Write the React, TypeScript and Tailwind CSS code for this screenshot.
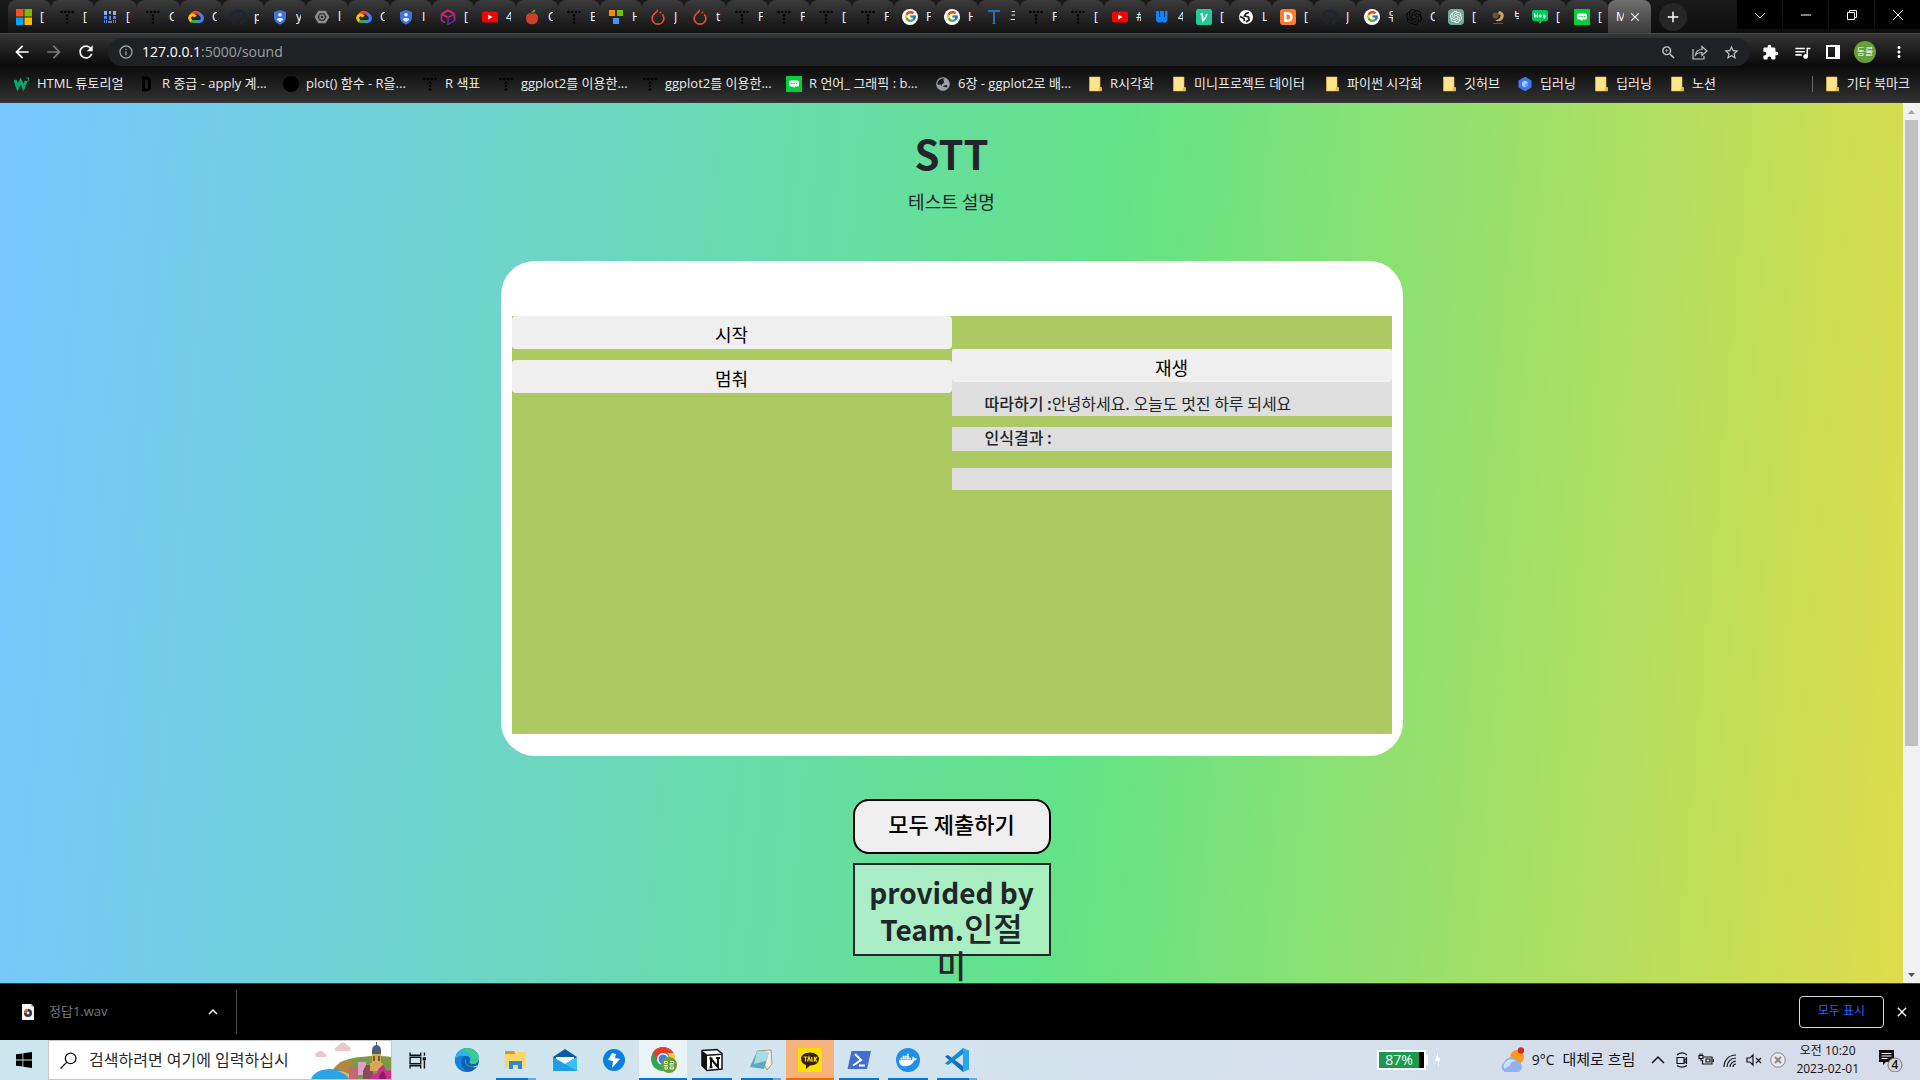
import type { ReactNode } from "react";
import {
  MdArrowBack,
  MdArrowForward,
  MdRefresh,
  MdInfoOutline,
  MdZoomIn,
  MdStarBorder,
  MdExtension,
  MdQueueMusic,
  MdMoreVert,
  MdClose,
  MdAdd,
  MdExpandLess,
} from "react-icons/md";
import { SiPytorch, SiOpenai, SiGithub } from "react-icons/si";
import { FaDocker, FaGlobeAsia } from "react-icons/fa";
import { FcGoogle } from "react-icons/fc";

/* ---------- Favicons ---------- */

function Svg({ children, size = 16 }: { children: ReactNode; size?: number }) {
  return (
    <svg viewBox="0 0 16 16" width={size} height={size} className="shrink-0" aria-hidden="true">
      {children}
    </svg>
  );
}

const favicons: Record<string, ReactNode> = {
  microsoft: (
    <Svg>
      <path fill="#f25022" d="M0 0h7.5v7.5H0z" />
      <path fill="#7fba00" d="M8.5 0H16v7.5H8.5z" />
      <path fill="#00a4ef" d="M0 8.5h7.5V16H0z" />
      <path fill="#ffb900" d="M8.5 8.5H16V16H8.5z" />
    </Svg>
  ),
  dots: (
    <Svg>
      <g fill="#000">
        <circle cx="2.500" cy="3" r="1.300" />
        <circle cx="6.200" cy="3" r="1.300" />
        <circle cx="9.900" cy="3" r="1.300" />
        <circle cx="13.500" cy="3" r="1.300" />
        <circle cx="8" cy="6.500" r="1.300" />
        <circle cx="8" cy="10" r="1.300" />
        <circle cx="8" cy="13.500" r="1.300" />
      </g>
    </Svg>
  ),
  bars: (
    <Svg>
      <path fill="#8ab0f5" d="M2 2h3v4H2zM7 2h2v3H7zM11 2h3v4h-3z" />
      <path fill="#5180e0" d="M2 7h3v3H2zM7 7h2v4H7zM11 7h3v3h-3zM2 11h1v3H2zM4 11h1v3H4zM6 12h4v2H6zM11 11h1v3h-1zM13 11h1v3h-1z" />
    </Svg>
  ),
  cloud: (
    <Svg>
      <g fill="none" strokeWidth="3">
        <path stroke="#ea4335" d="M3.6 6C4.8 2.6 9.500 2.200 11.500 5" />
        <path stroke="#4285f4" d="M11 4.800c2.500 1.400 3.800 2.800 3.300 5.200-.5 2-2 2.600-3.300 2.600H8" />
        <path stroke="#34a853" d="M9 12.600H5c-.8 0-1.600-.3-2.200-.8" />
        <path stroke="#fbbc04" d="M3.400 12.200C.6 10 1.400 6.700 4 6c1.500-.3 3 .6 3.500 1.700" />
      </g>
    </Svg>
  ),
  github: <SiGithub size={16} color="#1f262d" />,
  shield: (
    <Svg>
      <path fill="#3f74dc" d="M8 1l6 2v5c0 4-3 6.500-6 7.500C5 14.500 2 12 2 8V3z" />
      <circle cx="8" cy="5.800" r="1.800" fill="#e8f0fe" />
      <path fill="#e8f0fe" d="M4.600 10.500c1-2 5.800-2 6.800 0L8 13z" />
    </Svg>
  ),
  hexnut: (
    <Svg>
      <path fill="none" stroke="#8c8c8c" strokeWidth="2.500" d="M5 3h6l3 5-3 5H5L2 8z" />
      <circle cx="8" cy="8" r="2" fill="none" stroke="#8c8c8c" strokeWidth="1.500" />
    </Svg>
  ),
  cube: (
    <Svg>
      <g fill="none" strokeWidth="1.800">
        <path stroke="#e5256d" d="M1.500 5L8 1.200 14.500 5M1.500 5L8 8.500" />
        <path stroke="#a02a86" d="M1.500 4.500v7L5 13.500M8 8.500L14.500 5v7" />
        <path stroke="#5b2a8c" d="M8 8v7.500l6.500-4" />
      </g>
    </Svg>
  ),
  youtube: (
    <Svg>
      <rect y="2.500" width="16" height="11" rx="2.500" fill="#f00" />
      <path fill="#fff" d="M6.200 5.500v5L10.500 8z" />
    </Svg>
  ),
  apple: (
    <Svg>
      <path fill="#d03f2b" d="M8 5c3-2 6 0 6 4s-3 7-6 6c-3 1-6-2-6-6s3-6 6-4z" />
      <path fill="none" stroke="#7a4a21" d="M8 5l-.5-3" />
      <path fill="#5fa83a" d="M8 3.500C8.500 1 10.500.5 11.500 1c-.5 2-2 3-3.500 2.500z" />
    </Svg>
  ),
  squares: (
    <Svg>
      <path fill="#f80" d="M1 1h6v6H1z" />
      <path fill="#6fc400" d="M9 1h6v6H9z" />
      <path fill="#3f97f2" d="M5 9h6v6H5z" />
    </Svg>
  ),
  pytorch: <SiPytorch size={16} color="#ee4c2c" />,
  google: (
    <span className="grid size-4 place-items-center rounded-full bg-white">
      <FcGoogle size={13} />
    </span>
  ),
  tblue: (
    <Svg>
      <path fill="#2673b8" d="M2 1h12v2H9v11l1 1H6l1-1V3H2z" />
    </Svg>
  ),
  wblue: (
    <Svg>
      <path fill="#0a84ff" d="M2 2h3v6h1V2h4v6h1V2h2.500v9l-1.500 2.500h-3L8 12.500l-1 1H3.500L2 11z" />
    </Svg>
  ),
  velog: (
    <Svg>
      <rect width="16" height="16" rx="2" fill="#20c997" />
      <path fill="none" stroke="#fff" strokeWidth="1.800" d="M4.500 5.500l1.500-.5 1 6.500c2.500-2.500 4-4 3.500-6.500" />
    </Svg>
  ),
  globe: (
    <Svg>
      <circle cx="8" cy="8" r="7" fill="#fff" />
      <path fill="none" stroke="#202124" strokeWidth="1.800" d="M11 3.500L8 4.500 6.500 7l4 1 .5 3-3 2M2 7.500l4 2 .5 2.500" />
    </Svg>
  ),
  graydoc: <FaGlobeAsia size={14} color="#9aa0a6" />,
  dorange: (
    <Svg>
      <rect width="16" height="16" rx="3" fill="#ff7a29" />
      <path fill="none" stroke="#fff" strokeWidth="2.500" d="M5.200 4.200h2.500c5 0 5 7.600 0 7.600H5.200z" />
    </Svg>
  ),
  openai: <SiOpenai size={16} color="#050505" />,
  chatgpt: (
    <span className="grid size-4 place-items-center rounded-sm bg-[#74aa9c]">
      <SiOpenai size={12} color="#fff" />
    </span>
  ),
  bird: (
    <Svg>
      <path fill="#caa26a" d="M9 2c4 0 6 4 4 7.500S7 13 5 11c3 0 6-2 5.500-5L8 5z" />
      <circle cx="5.500" cy="6.500" r="3" fill="#6d5436" />
      <path stroke="#6d5436" d="M3 14.500h10" />
    </Svg>
  ),
  blog: (
    <Svg>
      <path fill="#03c75a" d="M2 1h12a2 2 0 012 2v7a2 2 0 01-2 2h-4l-2 3-2-3H2a2 2 0 01-2-2V3a2 2 0 012-2z" />
      <path fill="none" stroke="#fff" d="M2.500 4v4h1.500V6H2.500M5.500 4v4.500M7.500 6h1.500v2H7.500zM11.500 6h1.500v3h-1.500M11.500 6v2h1.500" />
    </Svg>
  ),
  naver: (
    <Svg>
      <path fill="#03cf3c" d="M0 0h16v16H0z" />
      <path fill="#fff" d="M4.500 4.500h7a1.500 1.500 0 011.500 1.500v3a1.500 1.500 0 01-1.500 1.500H9L8 12l-1-1.500H4.500A1.500 1.500 0 013 9V6a1.500 1.500 0 011.500-1.500z" />
      <path stroke="#03cf3c" d="M5 7.500h1.500M7.500 7.500H9M10 7.500h1.200" />
    </Svg>
  ),
  w3: (
    <Svg>
      <path fill="none" stroke="#04aa6d" strokeWidth="3" d="M1 4l2.500 7.500L6.500 5l3 6.500L12 5" />
      <path fill="none" stroke="#04aa6d" d="M12.500 2H15l-1 1.500c2 0 1 2.500-1 1.800" />
    </Svg>
  ),
  dblack: (
    <Svg>
      <path fill="none" stroke="#000" strokeWidth="3" d="M4.500 2v12h3c2 0 3-1 3-3V5c0-2-1-3-3-3z" />
    </Svg>
  ),
  blackdot: (
    <Svg>
      <circle cx="8" cy="8" r="8" fill="#000" />
    </Svg>
  ),
  folder: (
    <Svg>
      <path fill="#ffe48c" stroke="#e8c04c" strokeWidth=".6" d="M2.500 1H13v10.500h1.500V15h-12z" />
      <path fill="#e8bd3f" d="M12 11.500h2.500V15h-3z" />
    </Svg>
  ),
  hexblue: (
    <Svg>
      <path fill="#3b78f0" d="M8 .8l6.500 3.600v7.200L8 15.200l-6.500-3.600V4.400z" />
      <path fill="#a9c6ff" d="M8 4.500l3 1.700v3.500L8 11.500 5 9.700V6.200z" />
      <path fill="#6c9bf7" d="M8 8l3-1.800v3.500L8 11.500z" />
    </Svg>
  ),
};

/* ---------- Browser data ---------- */

const tabs: [string, string][] = [
  ["microsoft", "["], ["dots", "["], ["bars", "["], ["dots", "C"], ["cloud", "C"], ["github", "p"],
  ["shield", "y"], ["hexnut", "l"], ["cloud", "C"], ["shield", "I"], ["cube", "["], ["youtube", "4"],
  ["apple", "C"], ["dots", "E"], ["squares", "H"], ["pytorch", "J"], ["pytorch", "t"], ["dots", "F"],
  ["dots", "F"], ["dots", "["], ["dots", "F"], ["google", "F"], ["google", "H"], ["tblue", "크"],
  ["dots", "F"], ["dots", "["], ["youtube", "#"], ["wblue", "4"], ["velog", "["], ["globe", "L"],
  ["dorange", "["], ["github", "J"], ["google", "위"], ["openai", "C"], ["chatgpt", "["], ["bird", "빅"],
  ["blog", "["], ["naver", "["],
];

const bookmarks: [string, string, string][] = [
  ["w3", "HTML 튜토리얼", "w-[125px]"],
  ["dblack", "R 중급 - apply 계...", "w-[144px]"],
  ["blackdot", "plot() 함수 - R을...", "w-[139px]"],
  ["dots", "R 색표", "w-[76px]"],
  ["dots", "ggplot2를 이용한...", "w-[144px]"],
  ["dots", "ggplot2를 이용한...", "w-[144px]"],
  ["naver", "R 언어_ 그래픽 : b...", "w-[149px]"],
  ["graydoc", "6장 - ggplot2로 배...", "w-[152px]"],
  ["folder", "R시각화", "w-[84px]"],
  ["folder", "미니프로젝트 데이터", "w-[153px]"],
  ["folder", "파이썬 시각화", "w-[117px]"],
  ["folder", "깃허브", "w-[76px]"],
  ["hexblue", "딥러닝", "w-[76px]"],
  ["folder", "딥러닝", "w-[76px]"],
  ["folder", "노션", "w-[60px]"],
];

/* ---------- Browser chrome ---------- */

function TabStrip() {
  return (
    <div className="flex h-[33px] shrink-0 items-stretch bg-linear-to-b from-[#1a1a1a] to-[#0e0e0e] pl-2">
      {tabs.map(([icon, title], i) => (
        <button
          key={i}
          className={
            (i < 4 ? "w-[43px]" : "w-[42px]") +
            " flex shrink-0 items-center gap-2 rounded-t-lg bg-linear-to-b from-[#3c3c3c] to-[#121212] pl-2 text-left"
          }
        >
          <span className="flex w-4 justify-center">{favicons[icon]}</span>
          <span className="w-[5px] shrink-0 overflow-hidden whitespace-nowrap text-xs text-white">{title}</span>
          <span className="mb-1.5 ml-auto h-5 w-px shrink-0 self-end bg-[#5a5a5a]" />
        </button>
      ))}
      <div className="flex w-[43px] shrink-0 items-center gap-1 rounded-t-lg bg-linear-to-b from-[#707070] to-[#3a3a3a] pl-2 text-white">
        <span className="w-2 overflow-hidden text-xs">M</span>
        <button aria-label="탭 닫기">
          <MdClose size={14} />
        </button>
      </div>
      <button aria-label="새 탭" className="ml-2 mt-[3px] grid size-7 place-items-center rounded-full bg-[#262626] text-white">
        <MdAdd size={18} />
      </button>
      <div className="ml-auto flex h-[29px] gap-px text-white">
        {["M3 6l5 5 5-5", "M3 8h10", "M3.500 5.500h7v7h-7zM5.500 5.500v-2h7v7h-2", "M3 3l10 10M13 3L3 13"].map((d, i) => (
          <button key={i} aria-label={["탭 검색", "최소화", "이전 크기로", "닫기"][i]} className="grid w-[45px] place-items-center bg-black">
            <svg viewBox="0 0 16 16" width="16" height="16" fill="none" stroke="currentColor">
              <path d={d} />
            </svg>
          </button>
        ))}
      </div>
    </div>
  );
}

function Toolbar() {
  return (
    <div className="flex h-[33px] shrink-0 items-end border-t border-[#484848] bg-linear-to-b from-[#363636] to-[#0a0a0a] pl-3 text-white">
      <div className="flex h-7 items-center gap-3 pr-3">
        <button aria-label="뒤로"><MdArrowBack size={20} /></button>
        <button aria-label="앞으로" className="text-[#7a7a7a]"><MdArrowForward size={20} /></button>
        <button aria-label="새로고침"><MdRefresh size={20} /></button>
      </div>
      <div className="flex h-7 grow items-center rounded-full bg-[#202124] pl-2.5 pr-2.5 text-[#9aa0a6]">
        <MdInfoOutline size={16} />
        <label className="relative ml-2 flex grow items-center">
          <span aria-hidden="true" className="text-sm leading-5 whitespace-nowrap">
            <span className="text-white">127.0.0.1</span>:5000/sound
          </span>
          <input aria-label="주소" className="absolute inset-0 bg-transparent outline-none" />
        </label>
        <div className="flex items-center gap-[15px] text-[#c4c7c9]">
          <button aria-label="확대/축소"><MdZoomIn size={17} /></button>
          <button aria-label="공유">
            <svg viewBox="0 0 16 16" width="16" height="16" fill="none" stroke="currentColor" strokeWidth="1.200">
              <path d="M1 5v10h11v-3M3.500 11c.5-4 3-5.500 6.500-5.500V2.500l5 4.500-5 4.500V8.500c-3 0-5 .5-6.500 2.500z" />
            </svg>
          </button>
          <button aria-label="북마크에 추가"><MdStarBorder size={17} /></button>
        </div>
      </div>
      <div className="flex h-7 items-center gap-3.5 pl-3 pr-3">
        <button aria-label="확장 프로그램"><MdExtension size={17} /></button>
        <button aria-label="미디어 제어"><MdQueueMusic size={19} /></button>
        <button aria-label="사이드 패널">
          <svg viewBox="0 0 14 14" width="14" height="14">
            <path fill="#fff" fillRule="evenodd" d="M0 0h14v14H0zM2 2v10h7V2z" />
          </svg>
        </button>
        <button className="grid size-[22px] place-items-center rounded-full bg-[#689f38] text-[9px]">동률</button>
        <button aria-label="메뉴"><MdMoreVert size={18} /></button>
      </div>
    </div>
  );
}

function BookmarkBar() {
  return (
    <nav className="flex h-[37px] shrink-0 items-center border-b border-[#3a3a3a] bg-linear-to-b from-[#0c0c0c] to-[#323232] pl-3.5 pr-2.5 text-[13px] text-[#e8eaed]">
      {bookmarks.map(([icon, title, width], i) => (
        <a key={i} href="#" className={width + " flex shrink-0 items-center gap-[7px] whitespace-nowrap"}>
          <span className="flex w-4 justify-center">{favicons[icon]}</span>
          {title}
        </a>
      ))}
      <a href="#" className="ml-auto flex items-center gap-[7px] whitespace-nowrap">
        <span className="mr-1 h-4 w-px bg-[#6a6a6a]" />
        {favicons.folder}
        기타 북마크
      </a>
    </nav>
  );
}

/* ---------- Page ---------- */

function Page() {
  return (
    <div className="flex min-h-0 grow">
      <main className="flex min-w-0 grow flex-col items-center overflow-hidden bg-[linear-gradient(95deg,#78c8ff_1%,#62e387_56%,#e4dc48_100%)] bg-[length:100%_1197px] pt-[26px] font-['Noto_Sans_CJK_KR',sans-serif] text-[#212529]">
        <h1 className="text-[40px] leading-[48px] font-bold">STT</h1>
        <p className="mt-2.5 text-lg leading-7">테스트 설명</p>
        <section className="mt-[46px] w-[902px] shrink-0 rounded-[34px] bg-white px-[11px] pt-[55px] pb-[22px]">
          <div className="grid min-h-[418px] grid-cols-2 content-start bg-[#adca62]">
            <div className="flex flex-col gap-[11px]">
              <button className="h-[33px] rounded bg-[#efefef] pt-0.5 text-lg leading-7 text-black">시작</button>
              <button className="h-[33px] rounded bg-[#efefef] pt-0.5 text-lg leading-7 text-black">멈춰</button>
            </div>
            <div className="pt-[33px] leading-6">
              <div className="bg-[#dedede]">
                <button className="block h-[33px] w-full rounded bg-[#efefef] pt-0.5 text-lg leading-7 text-black">재생</button>
                <p className="h-[34px] px-[33px] pt-[9px]">
                  <b className="font-medium">따라하기 :</b>안녕하세요. 오늘도 멋진 하루 되세요
                </p>
              </div>
              <p className="mt-[11px] h-6 bg-[#dedede] px-[33px] leading-5 font-medium">인식결과 :</p>
              <p className="mt-[17px] h-[22px] bg-[#dedede]" />
            </div>
          </div>
        </section>
        <button className="mt-[43px] h-[55px] w-[198px] shrink-0 rounded-2xl border-2 border-black bg-[#efefef] pb-2 text-[22px] leading-8 font-medium text-black">
          모두 제출하기
        </button>
        <div className="mt-[9px] h-[93px] w-[198px] shrink-0 border-2 border-[#212529] bg-white/45 pt-2.5 text-center text-[28px] leading-[35px] font-bold whitespace-nowrap">
          provided by
          <br />
          Team.<span className="text-[32px] font-medium">인절<br />미</span>
        </div>
      </main>
      <div className="flex w-[17px] shrink-0 flex-col items-center justify-between bg-[#f1f1f1]">
        <svg viewBox="0 0 17 17" width="17" height="17"><path fill="#a3a3a3" d="M5 11l3.500-4 3.500 4z" /></svg>
        <div className="flex w-[13px] grow flex-col"><div className="h-[74%] bg-[#c1c1c1]" /></div>
        <svg viewBox="0 0 17 17" width="17" height="17"><path fill="#505050" d="M5 7l3.500 4L12 7z" /></svg>
      </div>
    </div>
  );
}

function DownloadBar() {
  return (
    <div className="flex h-[57px] shrink-0 items-center border-t border-[#3c4043] bg-black pl-5 pr-2.5">
      <svg viewBox="0 0 16 16" width="16" height="16">
        <path fill="#f4f4f4" d="M2 0h9l3 3v13H2z" />
        <path fill="#bbb" d="M11 0l3 3h-3z" />
        <circle cx="8" cy="9" r="4" fill="#3a3350" />
        <path fill="#e0703a" d="M4 9a4 4 0 014-4v2a2 2 0 00-2 2z" />
        <circle cx="8" cy="9" r="1.400" fill="#fff" />
      </svg>
      <span className="ml-[13px] text-[13px] text-[#75787b]">정답1.wav</span>
      <div className="flex grow items-center">
        <button aria-label="옵션 더보기" className="ml-24 text-white"><MdExpandLess size={18} /></button>
        <span className="ml-[14px] h-11 w-px bg-[#4a4a4a]" />
      </div>
      <button className="h-8 w-[85px] rounded border border-[#dadce0] pb-0.5 text-xs text-[#1967ff]">모두 표시</button>
      <button aria-label="닫기" className="ml-2.5 text-white"><MdClose size={16} /></button>
    </div>
  );
}

/* ---------- Taskbar ---------- */

function App24({ children }: { children: ReactNode }) {
  return (
    <svg viewBox="0 0 24 24" width="24" height="24" aria-hidden="true">
      {children}
    </svg>
  );
}

const apps: { name: string; cell: string; line: string; icon: ReactNode }[] = [
  {
    name: "Edge", cell: "", line: "",
    icon: (
      <App24>
        <circle cx="12" cy="12" r="12" fill="#0c63b8" />
        <path fill="#2cb5e8" d="M0 12C1 4 6 0 12 0c7 0 12 5 12 10 0 4-3 6-6 6-3 0-4-1-3-3 1-3-1-5-4-5C6 8 1 10 0 12z" />
        <path fill="#43cf7a" d="M12 0c7 0 12 5 12 10 0 4-3 6-6 6-3 0-4-1-3-3C18 9 14 3 6 2c2-1 4-2 6-2z" opacity=".75" />
        <path fill="#1583d8" d="M0 12c1-3 5-5 9-4-4 3-4 12 4 16C6 24 0 19 0 12z" />
        <path fill="#d2e7ef" d="M10.500 11c-1 3 1 6.500 5 7.500 3 .5 5.500 0 7-1.500l-.5 1.500c-1.500 1-8 1.500-11-2.500-1.300-2-1.500-4-.5-5z" />
      </App24>
    ),
  },
  {
    name: "파일 탐색기", cell: "", line: "w-10 bg-linear-to-r from-[#0078d7] from-80% to-[#66aae4] to-80%",
    icon: (
      <App24>
        <path fill="#d99a10" d="M1 3h9l2 3H1z" />
        <path fill="#ffd767" d="M1 6h10l2-2h9v16H1z" />
        <path fill="#2f87d8" d="M5 21v-8h13v8h-4v-4h-5v4z" />
      </App24>
    ),
  },
  {
    name: "메일", cell: "", line: "",
    icon: (
      <App24>
        <path fill="#0a5aa8" d="M0 9l12-8 12 8v4H0z" />
        <path fill="#f5fafd" d="M3 9h18v6l-9 4-9-4z" />
        <path fill="#1e9fe8" d="M0 9l12 7L24 9v14H0z" />
        <path fill="#35c3f5" d="M12 16L24 9v14z" />
      </App24>
    ),
  },
  {
    name: "반디집", cell: "", line: "",
    icon: (
      <App24>
        <circle cx="12" cy="12" r="11" fill="#0b7fe0" />
        <path fill="#fff" d="M10 5L6 12l5 1-1 7 8-9-5-1 1-4z" />
      </App24>
    ),
  },
  {
    name: "Chrome", cell: "bg-[#eaf4f8]", line: "w-12 bg-[#0078d7]",
    icon: (
      <svg viewBox="0 0 28 28" width="28" height="28" aria-hidden="true">
        <circle cx="14" cy="13" r="12" fill="#34a353" />
        <path fill="#e23d30" d="M3.600 7a12 12 0 0120.800 0H14l-5 9z" />
        <path fill="#fcc934" d="M24.400 7A12 12 0 0114 25l5-9a6 6 0 00-1-9z" />
        <circle cx="14" cy="13" r="6" fill="#fff" />
        <circle cx="14" cy="13" r="4.500" fill="#3b7de8" />
        <circle cx="20" cy="19" r="8" fill="#689f38" />
        <path fill="none" stroke="#e4efd9" d="M15.500 15.500h3v2h-3zM15 19.500h4M16 21h2.500v2H16zM21 15.500h3.500v2H21v1.500h3.500M21 21h3.500v2H21z" />
      </svg>
    ),
  },
  {
    name: "Notion", cell: "", line: "w-10 bg-[#0078d7]",
    icon: (
      <App24>
        <path fill="#fff" stroke="#111" strokeWidth="1.500" d="M2 2.500L17 1.500l5 4V21l-15 1.500-5-5z" />
        <path fill="#111" d="M2 2.500l5 4.500v15.500l-5-5zM2 2.500l5 4 15-1v1.500L7 8z" />
        <path fill="none" stroke="#111" strokeWidth="2" d="M11 19v-8l7 8v-8.500M9.500 10.500h3M16 10h4M9.500 19.300h3" />
      </App24>
    ),
  },
  {
    name: "메모장", cell: "", line: "w-10 bg-linear-to-r from-[#0078d7] from-80% to-[#66aae4] to-80%",
    icon: (
      <App24>
        <path fill="#f1efe6" stroke="#8a7a5a" strokeWidth=".7" d="M8 3l14-1 1 14-5 6z" />
        <path fill="#5fa9bd" d="M8 3l12 1-5 17-14-2z" />
        <path fill="#a9dbe5" d="M8 3l12 1-3 9-12 3z" />
      </App24>
    ),
  },
  {
    name: "카카오톡", cell: "bg-[#f7b27c]", line: "w-12 bg-[#f76b00]",
    icon: (
      <App24>
        <path fill="#fae100" d="M0 0h24v24H0z" />
        <path fill="#391b1b" d="M12 4.500c5 0 9 2.800 9 6.500s-4 6.500-9 6.500L8 21v-4c-3-1-5-3.200-5-6 0-3.700 4-6.500 9-6.500z" />
        <path fill="none" stroke="#fae100" strokeWidth="1.200" d="M5.500 9h4M7.500 9v4.500M9.500 13.500L11 9l1.500 4.500M13.800 9v4h1.500M16.500 8.800v4.700M19 9l-2.200 2.200L19 13.500" />
      </App24>
    ),
  },
  {
    name: "PowerShell", cell: "", line: "w-10 bg-[#0078d7]",
    icon: (
      <App24>
        <path fill="#3f6fd0" d="M4.500 3H24l-4 18H.5z" />
        <path fill="none" stroke="#fff" strokeWidth="2" d="M8 6l6 6-8 5.500M12 17.500h6" />
      </App24>
    ),
  },
  {
    name: "Docker", cell: "", line: "w-10 bg-[#0078d7]",
    icon: (
      <span className="grid size-6 place-items-center rounded-full bg-[#1d8ff0]">
        <FaDocker size={18} color="#fff" />
      </span>
    ),
  },
  {
    name: "VS Code", cell: "", line: "w-10 bg-linear-to-r from-[#0078d7] from-80% to-[#66aae4] to-80%",
    icon: (
      <App24>
        <path fill="#0f6fb8" d="M0 8.500L3 7l15 11v6L0 8.500z" />
        <path fill="#1488d8" d="M0 15.500L3 17l15-11V0L0 15.500z" />
        <path fill="#2aa5f0" d="M18 0l6 2.500v19L18 24z" />
      </App24>
    ),
  },
];

const trayIcons = [
  "M3 3c3-2.500 7-2.500 10 0M3 13.500c3 2 7 2 10 0M3 5.500h7v6H3zM12.500 5v7M10 8.500l2.500-2M10 9l2.500 2",
  "M6 5h8v7H4.500V8M8 7h4v3H8zM15.500 7v3M1 3.500h4v3H1zM3 7v2M2 1.500v2M4 1.500v2",
  "M2 15C2 8 7 3 14 3M5 15c0-5 4-9 9-9M8 15c0-3 3-6 6-6M11 15c0-2 1-3 3-3",
  "M1 6h3l3-3v10l-3-3H1zM10 6l5 5M15 6l-5 5",
];

function Taskbar() {
  return (
    <footer className="flex h-10 shrink-0 items-stretch bg-linear-to-r from-[#cde5ee] via-[#d3e4ef] to-[#d6dae9] text-[#111]">
      <button aria-label="시작" className="grid w-12 place-items-center">
        <svg viewBox="0 0 16 16" width="16" height="16">
          <path d="M0 2.300L6.500 1.400v6.200H0zM7.300 1.300L16 0v7.600H7.300zM0 8.400h6.500v6.200L0 13.700zM7.300 8.400H16V16l-8.700-1.300z" />
        </svg>
      </button>
      <label className="flex w-[344px] items-center overflow-hidden border border-[#c6c6c6] bg-white pl-[11px]">
        <svg viewBox="0 0 16 16" width="17" height="17" fill="none" stroke="#111" strokeWidth="1.200" className="shrink-0">
          <circle cx="10" cy="6" r="5" />
          <path d="M6.500 9.500L.5 15.500" />
        </svg>
        <input
          aria-label="검색"
          placeholder="검색하려면 여기에 입력하십시"
          className="ml-3 w-[216px] shrink-0 bg-transparent text-base outline-none placeholder:text-[#2b2b2b]"
        />
        <svg viewBox="0 0 80 38" width="80" height="38" className="ml-auto shrink-0" aria-hidden="true">
          <path fill="#e9c7cb" d="M5 16a3 3 0 012-5 4 4 0 016 1 2.500 2.500 0 012 4zM24 10a4 4 0 013-5 5 5 0 019-1 4 4 0 013 6z" />
          <path fill="#7a9a48" d="M28 22c12-7 38-8 52-6v22H30z" />
          <path fill="#b5853f" d="M20 32c4-9 12-13 22-13l-4 12z" />
          <path fill="#2ea3e6" d="M0 38c4-11 22-13 36-6l8 6z" />
          <path fill="#f0b45c" d="M26 30c8 0 14 3 18 8h-6c-2-4-6-6-12-8z" />
          <path fill="#c9657a" d="M38 26h9v12h-9z" />
          <path fill="#d9a5c8" d="M47 21h8v13h-8z" />
          <path fill="#8b4a5c" d="M55 24h7v14H52V30z" />
          <path fill="#d6a957" d="M61 13h9v12h-9zM59 22h13v8H59z" />
          <path fill="#4e5f7e" d="M61 9a4.500 5 0 019 0v4h-9zM65 1h1v4h-1z" />
          <path fill="#7a5620" d="M62 15h2v5h-2zM67 15h2v5h-2z" />
          <path fill="#cf2f8b" d="M60 38c0-4 3-6 6-5 0-4 3-7 6-9 2 2 3 4 3 6 2-1 4-1 5-1v9z" />
          <path fill="#8e1a63" d="M68 38c0-4 2-7 4-8 2 2 3 5 3 8z" />
        </svg>
      </label>
      <button aria-label="작업 보기" className="grid w-[51px] place-items-center">
        <svg viewBox="0 0 16 16" width="17" height="17" fill="none" stroke="#111" strokeWidth="1.300">
          <path d="M1 .5v2.500h10V.5M1 5h10v6H1zM1 15.500V13h10v2.500M14.500 .5v3M14.500 8v7.500M13.500 5.500h2v1.500h-2z" />
        </svg>
      </button>
      <div className="flex gap-px">
        {apps.map((app) => (
          <button key={app.name} aria-label={app.name} className={app.cell + " flex w-12 flex-col items-center"}>
            <span className="grid h-[38px] place-items-center pt-0.5">{app.icon}</span>
            <span className={app.line + " h-0.5"} />
          </button>
        ))}
      </div>
      <div className="ml-auto flex items-center">
        <span className="grid h-5 w-[49px] place-items-center border-2 border-white bg-linear-to-r from-[#1a9a4a] from-88% to-black to-88% text-sm leading-4 text-white">
          <span className="pr-1">87%</span>
        </span>
        <span className="h-2.5 w-0.5 bg-white" />
        <svg viewBox="0 0 8 16" width="8" height="16" className="ml-1.5"><path fill="#fff" d="M4 0v6h2L4 16V9H1z" /></svg>
        <svg viewBox="0 0 24 26" width="24" height="26" className="ml-[58px]">
          <circle cx="17" cy="10" r="7" fill="#f79a1e" />
          <circle cx="21" cy="3.500" r="3.200" fill="#d52b1e" />
          <path fill="#8fb4ee" d="M5 25a5 5 0 01-1-9 7 7 0 0113-2 6 6 0 012 11z" />
          <path fill="#cfe0fb" d="M5 22a4 4 0 010-6 7 7 0 0111-2c-5 0-6 3-6 5-2 0-4 1-5 3z" />
        </svg>
        <span className="ml-2 flex gap-2 text-[15px] whitespace-nowrap"><span className="text-sm leading-6">9°C</span><span>대체로 흐림</span></span>
        <div className="ml-[15px] flex items-center gap-2">
          <svg viewBox="0 0 16 16" width="16" height="16" fill="none" stroke="#111" strokeWidth="1.500"><path d="M2 11l6-6 6 6" /></svg>
          {trayIcons.map((d, i) => (
            <svg key={i} viewBox="0 0 16 16" width="16" height="16" fill="none" stroke="#111" strokeWidth="1.200"><path d={d} /></svg>
          ))}
          <svg viewBox="0 0 16 16" width="16" height="16" fill="none" stroke="#888"><circle cx="8" cy="8" r="7.300" fill="#e8e8ee" /><path strokeWidth="2" d="M5 5l6 6M11 5l-6 6" /></svg>
        </div>
        <div className="ml-2.5 text-center text-xs leading-[18px] whitespace-nowrap">
          오전 10:20
          <br />
          2023-02-01
        </div>
        <button aria-label="알림 4개" className="relative ml-5 mr-[17px] h-6 w-6">
          <svg viewBox="0 0 24 24" width="24" height="24">
            <path fill="#111" d="M0 2h15v12H7l-3 3v-3H0z" />
            <path stroke="#fff" d="M2.500 5.500h10M2.500 8h10M2.500 10.500h6" />
            <circle cx="16" cy="17" r="7" fill="#d4d4d4" stroke="#777" />
          </svg>
          <span className="absolute right-0 bottom-0 w-4 text-center text-xs leading-[14px] font-semibold">4</span>
        </button>
      </div>
    </footer>
  );
}

export default function App() {
  return (
    <div className="flex h-screen flex-col overflow-hidden font-['Open_Sans','Noto_Sans_CJK_KR',sans-serif]">
      <TabStrip />
      <Toolbar />
      <BookmarkBar />
      <Page />
      <DownloadBar />
      <Taskbar />
    </div>
  );
}
